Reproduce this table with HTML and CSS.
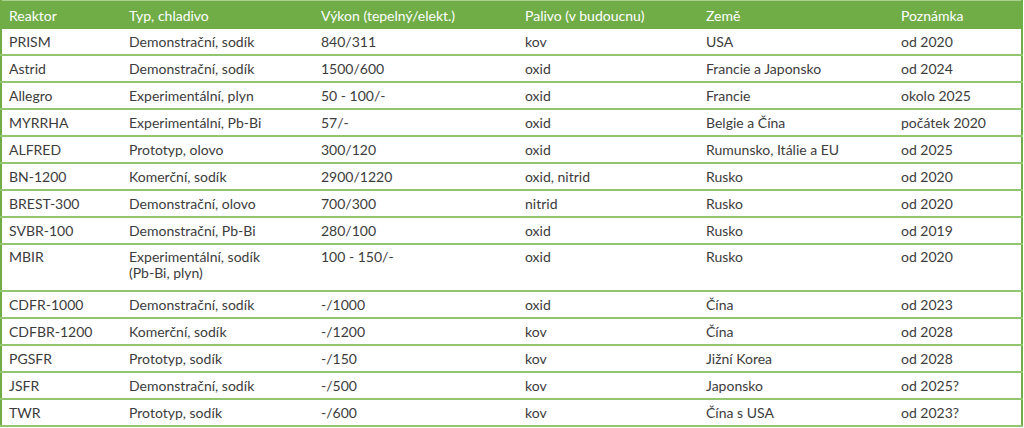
FILE: index.html
```html
<!DOCTYPE html>
<html lang="cs">
<head>
<meta charset="utf-8">
<title>Reaktory</title>
<link rel="stylesheet" href="styles.css">
</head>
<body>
<table class="reactors">
  <colgroup>
    <col class="c1"><col class="c2"><col class="c3"><col class="c4"><col class="c5"><col class="c6">
  </colgroup>
  <thead>
    <tr><th>Reaktor</th><th>Typ, chladivo</th><th>Výkon (tepelný/elekt.)</th><th>Palivo (v budoucnu)</th><th>Země</th><th>Poznámka</th></tr>
  </thead>
  <tbody>
    <tr><td>PRISM</td><td>Demonstrační, sodík</td><td>840/311</td><td>kov</td><td>USA</td><td>od 2020</td></tr>
    <tr><td>Astrid</td><td>Demonstrační, sodík</td><td>1500/600</td><td>oxid</td><td>Francie a Japonsko</td><td>od 2024</td></tr>
    <tr><td>Allegro</td><td>Experimentální, plyn</td><td>50 - 100/-</td><td>oxid</td><td>Francie</td><td>okolo 2025</td></tr>
    <tr><td>MYRRHA</td><td>Experimentální, Pb-Bi</td><td>57/-</td><td>oxid</td><td>Belgie a Čína</td><td>počátek 2020</td></tr>
    <tr><td>ALFRED</td><td>Prototyp, olovo</td><td>300/120</td><td>oxid</td><td>Rumunsko, Itálie a EU</td><td>od 2025</td></tr>
    <tr><td>BN-1200</td><td>Komerční, sodík</td><td>2900/1220</td><td>oxid, nitrid</td><td>Rusko</td><td>od 2020</td></tr>
    <tr><td>BREST-300</td><td>Demonstrační, olovo</td><td>700/300</td><td>nitrid</td><td>Rusko</td><td>od 2020</td></tr>
    <tr><td>SVBR-100</td><td>Demonstrační, Pb-Bi</td><td>280/100</td><td>oxid</td><td>Rusko</td><td>od 2019</td></tr>
    <tr class="tall"><td>MBIR</td><td>Experimentální, sodík<br>(Pb-Bi, plyn)</td><td>100 - 150/-</td><td>oxid</td><td>Rusko</td><td>od 2020</td></tr>
    <tr><td>CDFR-1000</td><td>Demonstrační, sodík</td><td>-/1000</td><td>oxid</td><td>Čína</td><td>od 2023</td></tr>
    <tr><td>CDFBR-1200</td><td>Komerční, sodík</td><td>-/1200</td><td>kov</td><td>Čína</td><td>od 2028</td></tr>
    <tr><td>PGSFR</td><td>Prototyp, sodík</td><td>-/150</td><td>kov</td><td>Jižní Korea</td><td>od 2028</td></tr>
    <tr><td>JSFR</td><td>Demonstrační, sodík</td><td>-/500</td><td>kov</td><td>Japonsko</td><td>od 2025?</td></tr>
    <tr><td>TWR</td><td>Prototyp, sodík</td><td>-/600</td><td>kov</td><td>Čína s USA</td><td>od 2023?</td></tr>
  </tbody>
</table>
</body>
</html>
```
FILE: styles.css
```css
html, body {
  margin: 0;
  padding: 0;
  background: #ffffff;
}

.reactors {
  width: 1023px;
  border-collapse: collapse;
  table-layout: fixed;
  font-family: Lato, "Open Sans", "Liberation Sans", sans-serif;
  font-size: 14px;
  color: #3c3c3c;
  border-left: 2px solid #70ad47;
  border-right: 2px solid #70ad47;
}

.c1 { width: 121px; }
.c2 { width: 192px; }
.c3 { width: 204px; }
.c4 { width: 181px; }
.c5 { width: 195px; }
.c6 { width: auto; }

.reactors th {
  background: #70ad47;
  color: #ffffff;
  font-weight: normal;
  text-align: left;
  height: 28px;
  padding: 0 0 0 7px;
  border-top: 1px solid #a9d18e;
}

.reactors td {
  height: 25px;
  padding: 0 0 0 7px;
  vertical-align: middle;
  border-bottom: 2px solid #92c56f;
  white-space: nowrap;
}

.reactors tr.tall td {
  height: 41px;
  vertical-align: top;
  padding-top: 4px;
  line-height: 16px;
}
```
